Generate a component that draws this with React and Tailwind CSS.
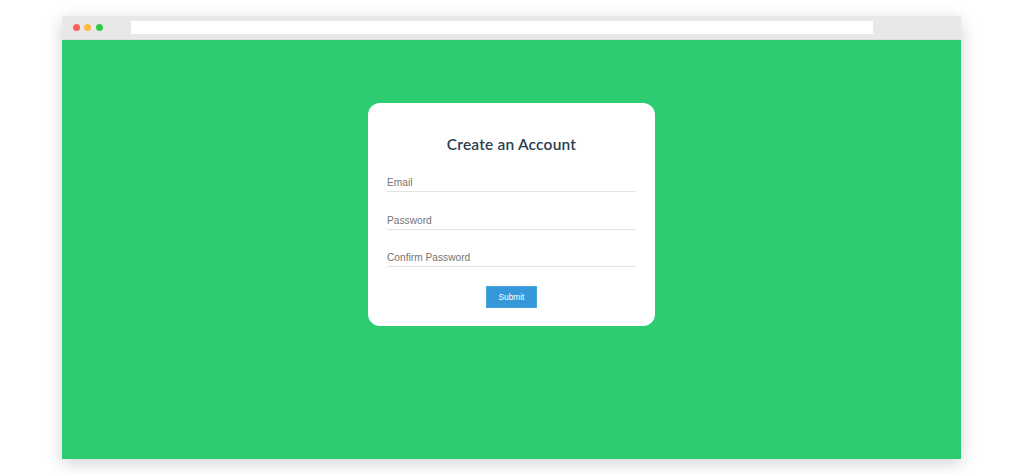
export default function App() {
  return (
    <div className="w-full h-[475px] bg-white overflow-hidden pt-[16px] pl-[62px]">
      <div className="w-[899px] h-[443px] flex flex-col shadow-[0_4px_16px_rgba(0,0,0,0.18)]">
        <div className="h-[24px] bg-[#e8e8e8] flex items-center pl-[10.5px] border-b border-[#dcdcdc]">
          <div className="flex gap-[4.7px]">
            <div className="w-[7px] h-[7px] rounded-full bg-[#fc605c]" />
            <div className="w-[7px] h-[7px] rounded-full bg-[#fdbc40]" />
            <div className="w-[7px] h-[7px] rounded-full bg-[#34c84a]" />
          </div>
          <div className="ml-[28px] w-[742px] h-[13px] bg-white" />
        </div>
        <div className="flex-1 bg-[#2ecc71] flex justify-center pt-[63px]">
          <div className="w-[287px] h-[223px] bg-white rounded-[12px] pt-[29px] px-[19px] flex flex-col" style={{ fontFamily: "'Liberation Sans', Arial, sans-serif" }}>
            <h1 className="h-[24px] leading-[24px] text-center text-[15.5px] font-semibold text-[#2c3e50] tracking-[0.2px]" style={{ fontFamily: "Lato, 'Open Sans', sans-serif" }}>
              Create an Account
            </h1>
            <div className="mt-[18px] h-[18px] border-b border-[#e3e3e3] text-[10.2px] leading-[17px] text-[#757575]">Email</div>
            <div className="mt-[20px] h-[18px] border-b border-[#e3e3e3] text-[10.2px] leading-[17px] text-[#757575]">Password</div>
            <div className="mt-[19px] h-[18px] border-b border-[#e3e3e3] text-[10.2px] leading-[17px] text-[#757575]">Confirm Password</div>
            <div className="mt-[19px] flex justify-center">
              <button className="w-[51px] h-[22px] bg-[#3498db] text-white text-[8.3px] leading-[20px] border border-[#4aa3df]">Submit</button>
            </div>
          </div>
        </div>
      </div>
    </div>
  );
}
